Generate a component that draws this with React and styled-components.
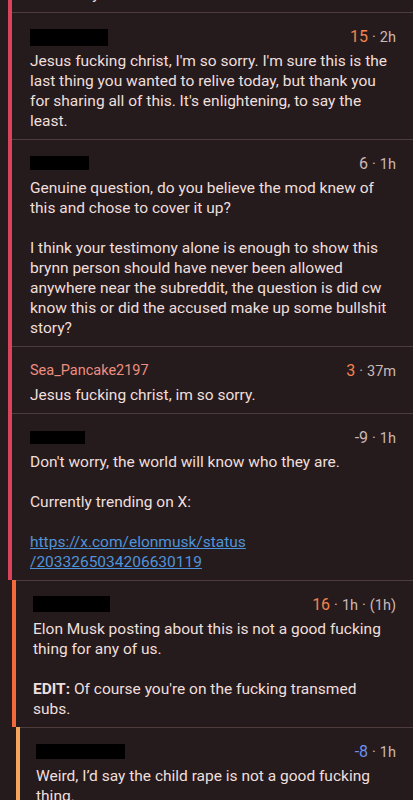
import React from "react";
import styled, { createGlobalStyle } from "styled-components";

const Global = createGlobalStyle`
  html, body { margin: 0; padding: 0; background: #261b1c; }
  body { font-family: Roboto, "Noto Sans", sans-serif; -webkit-font-smoothing: antialiased; }
`;

const Viewport = styled.div`
  width: 413px;
  height: 800px;
  overflow: hidden;
  background: #261b1c;
`;

const List = styled.div`
  display: flex;
  flex-direction: column;
  margin-top: -28px;
`;

const barColors = ["#d9435b", "#f26a3b", "#f5a65c"];

const Comment = styled.div`
  display: flex;
  margin-left: ${(p) => 8 + (p.$depth - 1) * 4}px;
`;

const Bar = styled.div`
  width: 4px;
  flex: none;
  background: ${(p) => barColors[p.$depth - 1]};
`;

const Card = styled.div`
  flex: 1;
  min-width: 0;
  border-top: ${(p) => (p.$noTop ? "none" : "1.5px solid #4e3d3d")};
  padding: 12px 17px 8px ${(p) => 18 - (p.$depth - 1)}px;
  display: flex;
  flex-direction: column;
  gap: 4px;
`;

const Header = styled.div`
  display: flex;
  align-items: center;
  justify-content: space-between;
  height: 22px;
`;

const Redacted = styled.div`
  background: #000;
  width: ${(p) => p.$w}px;
  height: ${(p) => p.$h}px;
  margin-top: ${(p) => p.$dy || 0}px;
`;

const Author = styled.span`
  color: #ec8e80;
  font-size: 14.5px;
`;

const Meta = styled.div`
  color: #cbb8b5;
  font-size: 14.5px;
  display: flex;
  align-items: baseline;
  gap: 4px;
`;

const Score = styled.span`
  font-size: 16px;
  color: ${(p) => (p.$tone === "up" ? "#f4824e" : p.$tone === "down" ? "#6d8ff0" : "#cbb8b5")};
`;

const Body = styled.div`
  color: #efdfdc;
  font-size: 15.5px;
  line-height: 20px;
  display: flex;
  flex-direction: column;
  gap: 20px;
`;

const P = styled.p`
  margin: 0;
`;

const Link = styled.a`
  color: #4f93da;
  text-decoration: underline;
`;

const Strong = styled.strong`
  font-weight: 700;
`;

function Entry({ depth, noTop, head, meta, children }) {
  return (
    <Comment $depth={depth}>
      <Bar $depth={depth} />
      <Card $depth={depth} $noTop={noTop}>
        {head && (
          <Header>
            {head}
            <Meta>{meta}</Meta>
          </Header>
        )}
        <Body>{children}</Body>
      </Card>
    </Comment>
  );
}

const Dot = () => <span>·</span>;

export default function App() {
  return (
    <>
      <Global />
      <Viewport>
        <List>
          <Entry depth={1} noTop>
            <P>been easy. Much love &lt;3</P>
          </Entry>
          <Entry
            depth={1}
            head={<Redacted $w={78} $h={17} $dy={2} />}
            meta={<><Score $tone="up">15</Score><Dot /><span>2h</span></>}
          >
            <P>
              Jesus fucking christ, I'm so sorry. I'm sure this is the last thing you wanted to
              relive today, but thank you for sharing all of this. It's enlightening, to say the
              least.
            </P>
          </Entry>
          <Entry
            depth={1}
            head={<Redacted $w={59} $h={14} />}
            meta={<><Score>6</Score><Dot /><span>1h</span></>}
          >
            <P>Genuine question, do you believe the mod knew of this and chose to cover it up?</P>
            <P>
              I think your testimony alone is enough to show this brynn person should have never
              been allowed anywhere near the subreddit, the question is did cw know this or did the
              accused make up some bullshit story?
            </P>
          </Entry>
          <Entry
            depth={1}
            head={<Author>Sea_Pancake2197</Author>}
            meta={<><Score $tone="up">3</Score><Dot /><span>37m</span></>}
          >
            <P>Jesus fucking christ, im so sorry.</P>
          </Entry>
          <Entry
            depth={1}
            head={<Redacted $w={55} $h={13} />}
            meta={<><Score>-9</Score><Dot /><span>1h</span></>}
          >
            <P>Don't worry, the world will know who they are.</P>
            <P>Currently trending on X:</P>
            <P>
              <Link href="#">
                https://x.com/elonmusk/status
                <br />
                /2033265034206630119
              </Link>
            </P>
          </Entry>
          <Entry
            depth={2}
            head={<Redacted $w={77} $h={16} />}
            meta={<><Score $tone="up">16</Score><Dot /><span>1h</span><Dot /><span>(1h)</span></>}
          >
            <P>Elon Musk posting about this is not a good fucking thing for any of us.</P>
            <P>
              <Strong>EDIT:</Strong> Of course you're on the fucking transmed subs.
            </P>
          </Entry>
          <Entry
            depth={3}
            head={<Redacted $w={89} $h={15} />}
            meta={<><Score $tone="down">-8</Score><Dot /><span>1h</span></>}
          >
            <P>Weird, I’d say the child rape is not a good fucking thing.</P>
          </Entry>
        </List>
      </Viewport>
    </>
  );
}
